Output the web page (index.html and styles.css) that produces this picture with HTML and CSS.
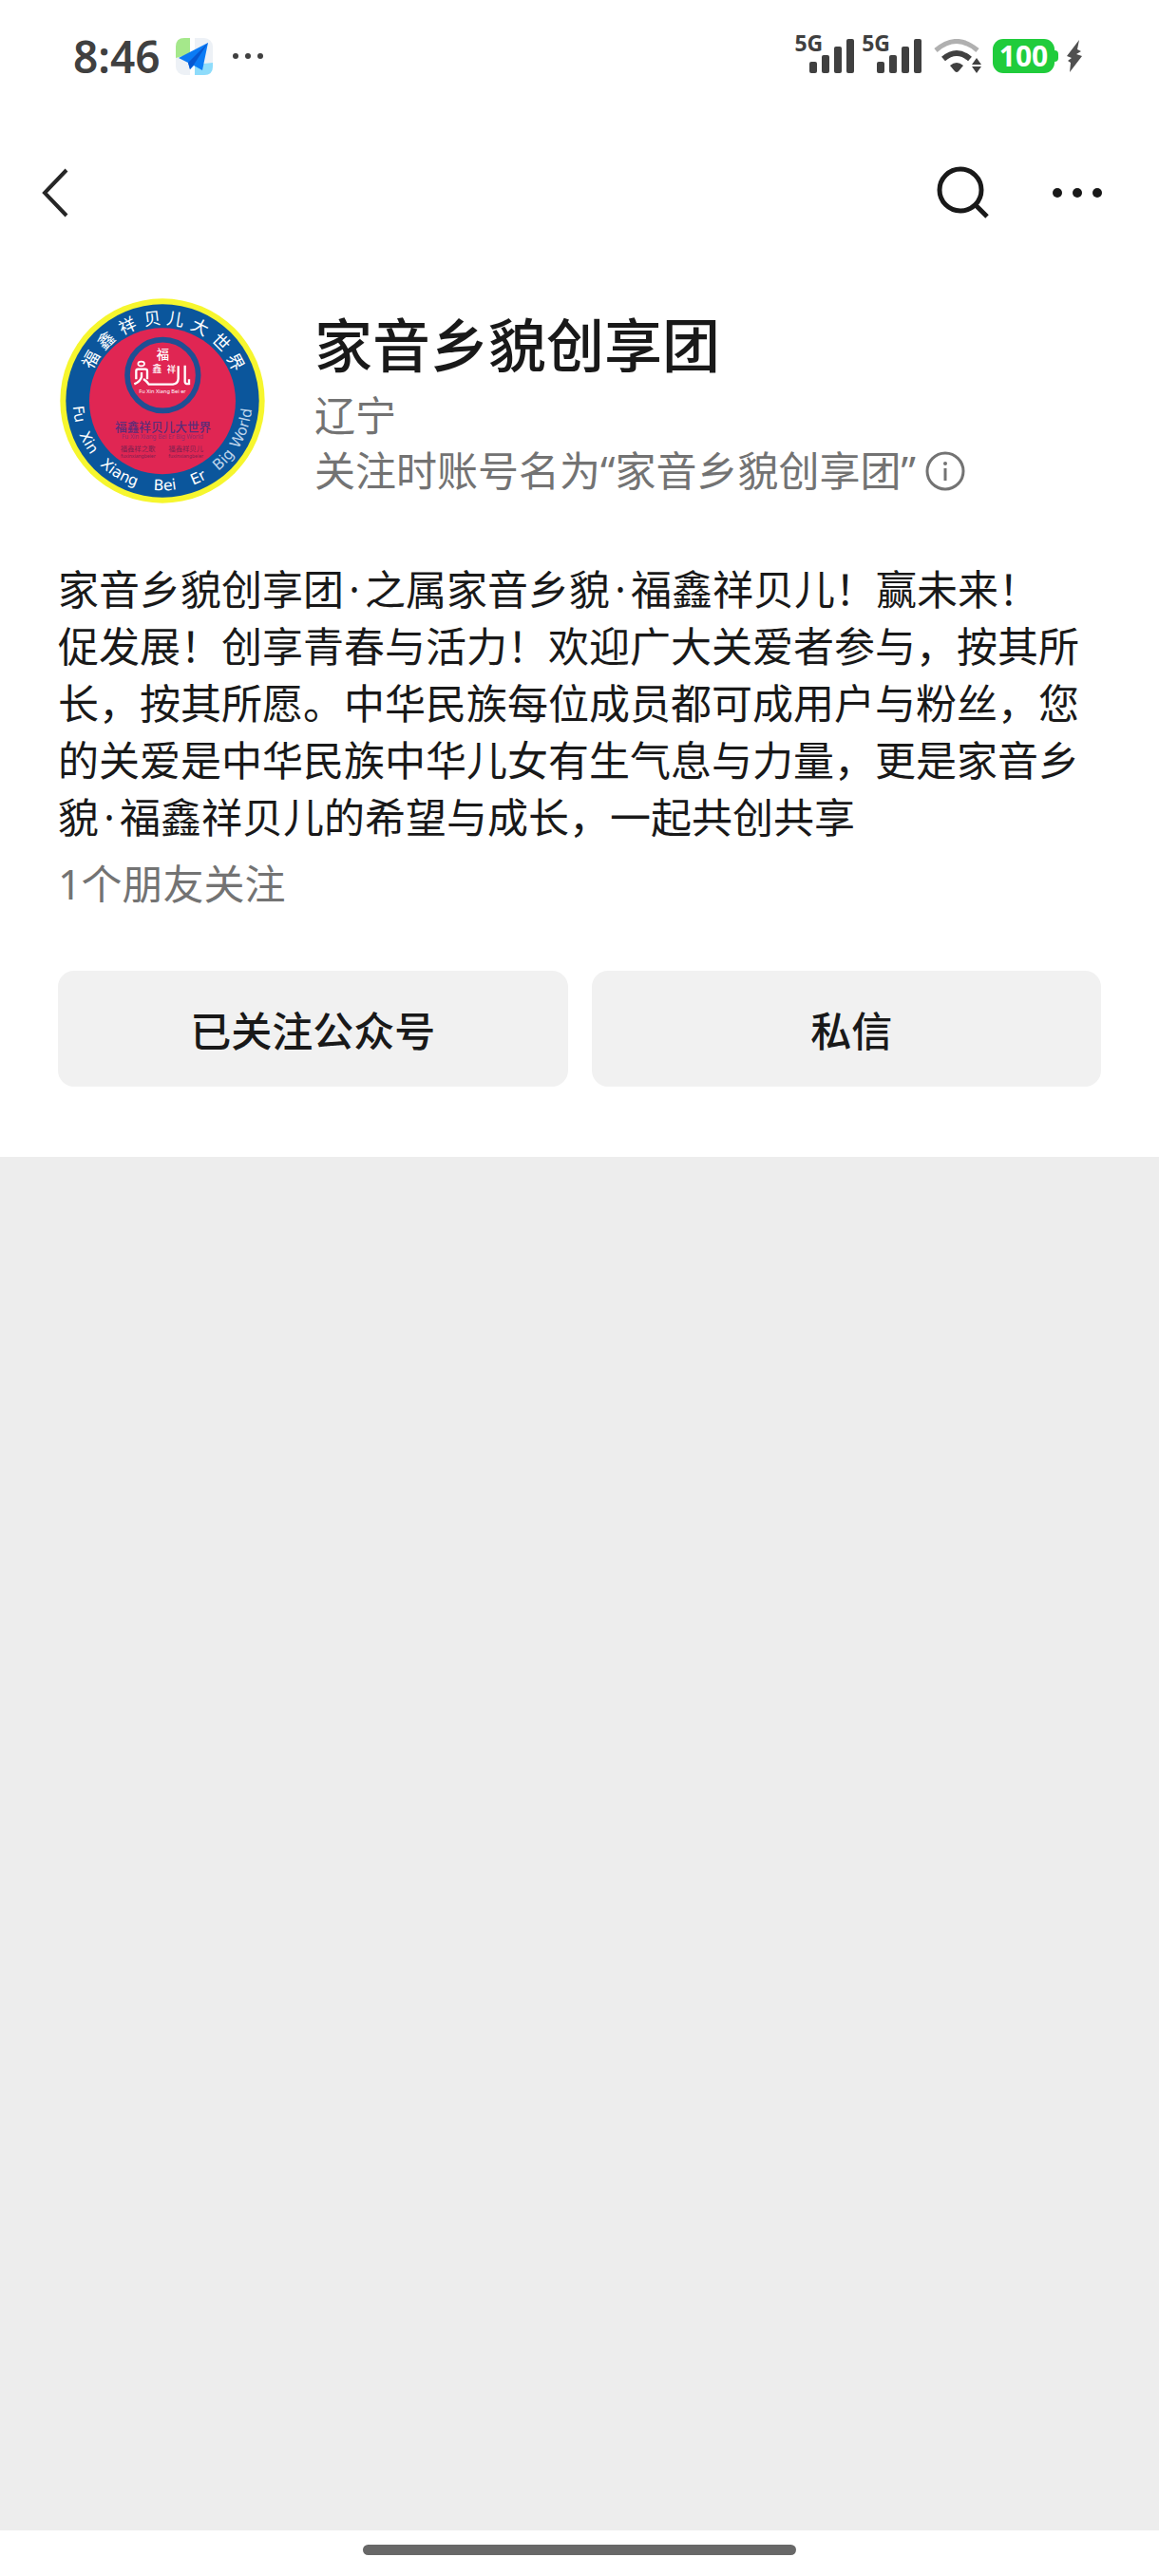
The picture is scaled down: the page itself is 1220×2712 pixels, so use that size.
FILE: index.html
```
<!DOCTYPE html>
<html lang="zh-CN">
  <head>
    <meta charset="UTF-8" />
    <meta name="viewport" content="width=device-width, initial-scale=1.0" />
    <title>家音乡貌创享团</title>
    <link rel="stylesheet" href="styles.css">
  </head>
  <body>
    <div class="status">
      <span class="time">8:46</span>
      <svg class="app-icon" viewBox="0 0 39 39" width="39" height="39">
        <rect width="39" height="39" rx="9" fill="#edf1f6" />
        <path d="M9 0H15V17L0 21V9Q0 0 9 0Z" fill="#a5e88b" />
        <path d="M20 28L39 26V30Q39 39 30 39H20Z" fill="#8edcfb" />
        <path d="M15 0H20V39H15Z" fill="#fff" />
        <path d="M34 5L3 21L13 26L15 33L19 29L28 34Z" fill="#0b7bf5" />
        <path d="M34 5L13 26L15 33L19 28Z" fill="#0757d0" />
      </svg>
      <svg class="more-dots" viewBox="0 0 34 8" width="34" height="8" fill="#404040">
        <circle cx="4" cy="4" r="3" />
        <circle cx="17" cy="4" r="3" />
        <circle cx="30" cy="4" r="3" />
      </svg>

      <div class="status-right">
        <div class="signal">
          <span>5G</span>
          <svg viewBox="0 0 47 36" width="47" height="36" fill="#404040">
            <rect x="0" y="24" width="8" height="12" rx="2" />
            <rect x="13" y="17" width="8" height="19" rx="2" />
            <rect x="26" y="8" width="8" height="28" rx="2" />
            <rect x="39" y="0" width="8" height="36" rx="2" />
          </svg>
        </div>
        <div class="signal">
          <span>5G</span>
          <svg viewBox="0 0 47 36" width="47" height="36" fill="#404040">
            <rect x="0" y="24" width="8" height="12" rx="2" />
            <rect x="13" y="17" width="8" height="19" rx="2" />
            <rect x="26" y="8" width="8" height="28" rx="2" />
            <rect x="39" y="0" width="8" height="36" rx="2" />
          </svg>
        </div>
        <svg class="wifi" viewBox="0 0 50 36" width="50" height="36">
          <path d="M2 12Q24 -7 46 12" fill="none" stroke="#b0b0b0" stroke-width="5" />
          <path d="M10 21Q24 9 38 21" fill="none" stroke="#404040" stroke-width="6" />
          <path d="M17 28Q24 22 31 28L26 34Q24 36 22 34Z" fill="#404040" />
          <path d="M45 20L50 27H40ZM45 36L50 29H40Z" fill="#404040" />
        </svg>
        <div class="battery">100</div>
        <svg class="bolt" viewBox="0 0 18 36" width="18" height="36">
          <path d="M14 1L1 18L6 20L2 23L5 25L4 35L17 18L11 16L16 13L12 11Z" fill="#505050" />
        </svg>
      </div>
    </div>

    <div class="nav">
      <button class="icon-btn" aria-label="返回">
        <svg viewBox="0 0 28 52" width="28" height="52">
          <path d="M26 2L3 26L26 50" fill="none" stroke="#262626" stroke-width="4" />
        </svg>
      </button>
      <div class="nav-right">
        <button class="icon-btn" aria-label="搜索">
          <svg viewBox="0 0 56 56" width="56" height="56" fill="none" stroke="#191919">
            <circle cx="25" cy="25" r="22" stroke-width="5" />
            <path d="M41 41L53 53" stroke-width="5" />
          </svg>
        </button>
        <button class="icon-btn" aria-label="更多">
          <svg viewBox="0 0 52 10" width="52" height="10" fill="#191919">
            <circle cx="5" cy="5" r="5" />
            <circle cx="26" cy="5" r="5" />
            <circle cx="47" cy="5" r="5" />
          </svg>
        </button>
      </div>
    </div>

    <div class="profile">
      <div class="head">
        <svg class="avatar" viewBox="33 36 660 660" width="220" height="220">
          <circle cx="363" cy="366" r="323" fill="#f6f62e" />
          <circle cx="363" cy="366" r="305" fill="#0b569c" />
          <circle cx="363" cy="367" r="231" fill="#e02653" />

          <!-- ring text, top -->
          <g class="ring-cn">
            <text x="363" y="124" transform="rotate(-60 363 366)">福</text>
            <text x="363" y="124" transform="rotate(-43 363 366)">鑫</text>
            <text x="363" y="124" transform="rotate(-25 363 366)">祥</text>
            <text x="363" y="124" transform="rotate(-7 363 366)">贝</text>
            <text x="363" y="124" transform="rotate(9 363 366)">儿</text>
            <text x="363" y="124" transform="rotate(27 363 366)">大</text>
            <text x="363" y="124" transform="rotate(45 363 366)">世</text>
            <text x="363" y="124" transform="rotate(62 363 366)">界</text>
          </g>

          <!-- ring text, bottom -->
          <path id="arc" d="M80 366A283 283 0 0 0 646 366" fill="none" />
          <g class="ring-en">
            <text><textPath href="#arc" startOffset="17">Fu</textPath></text>
            <text><textPath href="#arc" startOffset="108">Xin</textPath></text>
            <text><textPath href="#arc" startOffset="226">Xiang</textPath></text>
            <text><textPath href="#arc" startOffset="416">Bei</textPath></text>
            <text><textPath href="#arc" startOffset="543">Er</textPath></text>
            <text class="light"><textPath href="#arc" startOffset="634">Big</textPath></text>
            <text class="light"><textPath href="#arc" startOffset="728">World</textPath></text>
          </g>

          <!-- emblem -->
          <circle cx="364" cy="285" r="112" fill="none" stroke="#1f4f93" stroke-width="17" />
          <g class="emblem-cn">
            <text x="364" y="234" font-size="40">福</text>
            <text x="346" y="277" font-size="30">鑫</text>
            <text x="391" y="277" font-size="28">祥</text>
          </g>
          <g fill="none" stroke="#fff" stroke-width="7">
            <ellipse cx="296" cy="249" rx="10" ry="7" stroke-width="5" />
            <path d="M280 298V272Q280 266 286 266H309Q315 266 315 272V298" />
            <path d="M297 276V290Q294 304 274 313" />
            <path d="M303 297Q314 304 320 314H396Q412 312 413 296V256" />
            <path d="M434 254V306Q435 314 447 312V298" />
          </g>
          <text x="363" y="342" font-size="17" fill="#fff">Fu Xin Xiang Bei er</text>

          <g fill="#5c2c78">
            <text class="bold" x="365" y="462" font-size="38">福鑫祥贝儿大世界</text>
            <text x="363" y="485" font-size="19" fill="#8f2a6c">Fu Xin Xiang Bei Er Big World</text>
          </g>
          <g fill="#7c2150">
            <text x="285" y="524" font-size="22">福鑫祥之歌</text>
            <text x="437" y="524" font-size="22">福鑫祥贝儿</text>
            <text x="286" y="547" font-size="15">fuxinxiangbeier</text>
            <text x="437" y="547" font-size="15">fuxinxiangbeier</text>
          </g>
        </svg>

        <div class="info">
          <h1>家音乡貌创享团</h1>
          <div class="sub">辽宁</div>
          <div class="sub sub-name">
            <span>关注时账号名为“家音乡貌创享团”</span>
            <button class="icon-btn" aria-label="账号说明">
              <svg viewBox="0 0 42 42" width="42" height="42">
                <circle cx="21" cy="21" r="19" fill="none" stroke="#737373" stroke-width="3" />
                <circle cx="21" cy="13" r="2" fill="#737373" />
                <path d="M21 18V31" stroke="#737373" stroke-width="3" />
              </svg>
            </button>
          </div>
        </div>
      </div>

      <p class="bio">家音乡貌创享团<span class="dot">·</span>之属家音乡貌<span class="dot">·</span>福鑫祥贝儿！赢未来！<br>促发展！创享青春与活力！欢迎广大关爱者参与，按其所长，按其所愿。中华民族每位成员都可成用户与粉丝，您的关爱是中华民族中华儿女有生气息与力量，更是家音乡貌<span class="dot">·</span>福鑫祥贝儿的希望与成长，一起共创共享</p>
      <div class="friends">1个朋友关注</div>

      <div class="actions">
        <button class="btn">已关注公众号</button>
        <button class="btn">&nbsp;私信</button>
      </div>
    </div>

    <div class="feed"></div>

    <div class="home">
      <div class="home-bar"></div>
    </div>
  </body>
</html>
```
FILE: styles.css
```
* {
  box-sizing: border-box;
}
body {
  margin: 0;
  min-height: 100vh;
  display: flex;
  flex-direction: column;
  background: #fff;
  color: #191919;
  font-family: "Noto Sans", "Noto Sans CJK SC", sans-serif;
  font-size: 43px;
}
svg {
  display: block;
  flex-shrink: 0;
}
button {
  padding: 0;
  border: none;
  background: none;
  color: inherit;
  font-family: inherit;
  cursor: pointer;
}

/* status bar */
.status {
  height: 118px;
  padding: 0 80px 0 77px;
  display: flex;
  align-items: center;
  color: #404040;
}
.time {
  font-size: 46px;
  font-weight: 600;
  line-height: 44px;
}
.app-icon {
  margin-left: 16px;
}
.more-dots {
  margin-left: 20px;
}
.status-right {
  margin-left: auto;
  display: flex;
  align-items: center;
}
.signal {
  display: flex;
  align-items: flex-end;
  margin-right: 8px;
}
.signal span {
  align-self: flex-start;
  margin-right: -14px;
  font-size: 23px;
  font-weight: 700;
  line-height: 8px;
}
.wifi {
  margin: 0 12px 0 5px;
}
.battery {
  position: relative;
  width: 65px;
  height: 36px;
  border-radius: 11px;
  background: #20cc3c;
  color: #fff;
  font-size: 30px;
  font-weight: 700;
  line-height: 36px;
  text-align: center;
}
.battery::after {
  content: "";
  position: absolute;
  left: 65px;
  top: 12px;
  width: 4px;
  height: 12px;
  border-radius: 0 4px 4px 0;
  background: #20cc3c;
}
.bolt {
  margin-left: 12px;
}

/* nav */
.nav {
  height: 170px;
  padding: 0 60px 0 44px;
  display: flex;
  align-items: center;
  justify-content: space-between;
}
.nav-right {
  display: flex;
  align-items: center;
  gap: 66px;
}

/* profile */
.profile {
  padding: 24px 61px 74px;
}
.head {
  display: flex;
  align-items: center;
  gap: 50px;
}
.avatar text {
  text-anchor: middle;
}
.avatar .ring-cn {
  fill: #fff;
  font-size: 54px;
}
.avatar .ring-en text {
  fill: #fff;
  font-family: "DejaVu Sans", sans-serif;
  font-size: 47px;
  text-anchor: start;
}
.avatar .ring-en .light {
  fill: #bcd3ea;
}
.emblem-cn {
  fill: #fff;
  font-weight: 500;
}
.bold {
  font-weight: 500;
}
h1 {
  margin: 0;
  font-size: 61px;
  font-weight: 500;
  line-height: 90px;
}
.sub {
  color: #737373;
  line-height: 58px;
}
.sub-name {
  display: flex;
  align-items: center;
  gap: 10px;
}
.bio {
  margin: 59px 0 10px;
  line-height: 60px;
}
.dot {
  display: inline-block;
  width: 22px;
  text-align: center;
}
.friends {
  color: #737373;
  line-height: 60px;
}
.actions {
  display: flex;
  gap: 25px;
  margin-top: 61px;
}
.btn {
  flex: 1;
  height: 122px;
  border-radius: 17px;
  background: #f1f1f1;
  font-size: 43px;
  font-weight: 500;
}

.feed {
  flex: 1;
  background: #ededed;
}
.home {
  height: 48px;
  padding-top: 15px;
}
.home-bar {
  width: 456px;
  height: 11px;
  margin: 0 auto;
  border-radius: 6px;
  background: #686868;
}
```
